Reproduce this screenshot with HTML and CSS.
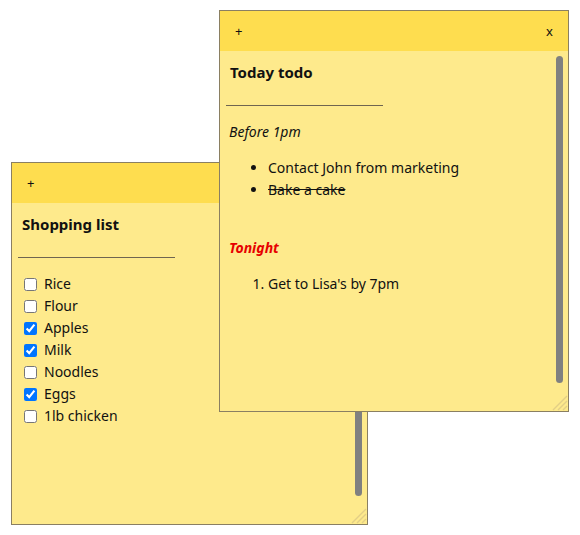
FILE: index.html
```html
<!DOCTYPE html>
<html>
<head>
<meta charset="utf-8">
<link rel="stylesheet" href="styles.css">
</head>
<body>
<div class="canvas">
  <div class="note back">
    <div class="head"><span>+</span></div>
    <div class="body">
      <div class="content">
        <div class="title">Shopping list</div>
        <div class="rule"></div>
        <label class="item"><input type="checkbox"> Rice</label>
        <label class="item"><input type="checkbox"> Flour</label>
        <label class="item"><input type="checkbox" checked> Apples</label>
        <label class="item"><input type="checkbox" checked> Milk</label>
        <label class="item"><input type="checkbox"> Noodles</label>
        <label class="item"><input type="checkbox" checked> Eggs</label>
        <label class="item"><input type="checkbox"> 1lb chicken</label>
      </div>
      <div class="gutter"><div class="thumb"></div></div>
    </div>
    <svg class="resizer" width="18" height="18" viewBox="0 0 18 18"><line x1="17" y1="3" x2="3" y2="17"/><line x1="17" y1="8" x2="8" y2="17"/><line x1="17" y1="13" x2="13" y2="17"/></svg>
  </div>

  <div class="note front">
    <div class="head"><span>+</span><span>x</span></div>
    <div class="body">
      <div class="content">
        <div class="title">Today todo</div>
        <div class="rule"></div>
        <p class="sub">Before 1pm</p>
        <ul class="list">
          <li>Contact John from marketing</li>
          <li><s>Bake a cake</s></li>
        </ul>
        <p class="blank"></p>
        <p class="sub red">Tonight</p>
        <ol class="list">
          <li>Get to Lisa's by 7pm</li>
        </ol>
      </div>
      <div class="gutter"><div class="thumb"></div></div>
    </div>
    <svg class="resizer" width="18" height="18" viewBox="0 0 18 18"><line x1="17" y1="3" x2="3" y2="17"/><line x1="17" y1="8" x2="8" y2="17"/><line x1="17" y1="13" x2="13" y2="17"/></svg>
  </div>
</div>
</body>
</html>
```
FILE: styles.css
```css
html, body {
  margin: 0;
  padding: 0;
  background: #ffffff;
}
body {
  font-family: "Noto Sans", "Open Sans", sans-serif;
  font-size: 14px;
  color: #111;
}
.canvas {
  position: relative;
  width: 580px;
  height: 535px;
}
.note {
  position: absolute;
  border: 1px solid #8a7f62;
  background: #feea8c;
  display: flex;
  flex-direction: column;
  box-sizing: content-box;
}
.front {
  left: 219px;
  top: 10px;
  width: 348px;
  height: 400px;
}
.back {
  left: 11px;
  top: 162px;
  width: 355px;
  height: 361px;
}
.head {
  height: 40px;
  flex: none;
  background: #fedd4f;
  display: flex;
  align-items: center;
  justify-content: space-between;
  padding: 0 15px 0 15px;
  font-size: 13px;
  color: #111;
}
.body {
  flex: 1;
  display: flex;
  min-height: 0;
}
.content {
  flex: 1;
  padding: 10px 0 0 10px;
  line-height: 22px;
}
.title {
  font-weight: bold;
  font-size: 15px;
}
.rule {
  margin: 22px 0 15px -4px;
  width: 157px;
  border-top: 1px solid #6f6550;
}
.sub {
  margin: 0 0 0 -1px;
  font-style: italic;
}
.red {
  color: #e60000;
  font-weight: bold;
}
.blank {
  margin: 0;
  height: 22px;
}
.list {
  margin: 14px 0;
  padding-left: 38px;
}
.item {
  display: flex;
  align-items: center;
  height: 22px;
  gap: 4px;
}
.item input {
  margin: 0 3px 0 2px;
  width: 13px;
  height: 13px;
}
.gutter {
  width: 16px;
  flex: none;
  display: flex;
  flex-direction: column;
  padding: 5px 0 28px 4px;
  box-sizing: border-box;
}
.thumb {
  flex: 1;
  width: 7px;
  border-radius: 4px;
  background: #808080;
}
.resizer {
  position: absolute;
  right: 0;
  bottom: 0;
}
.resizer line {
  stroke: #e3cf86;
  stroke-width: 1.5;
}
```
